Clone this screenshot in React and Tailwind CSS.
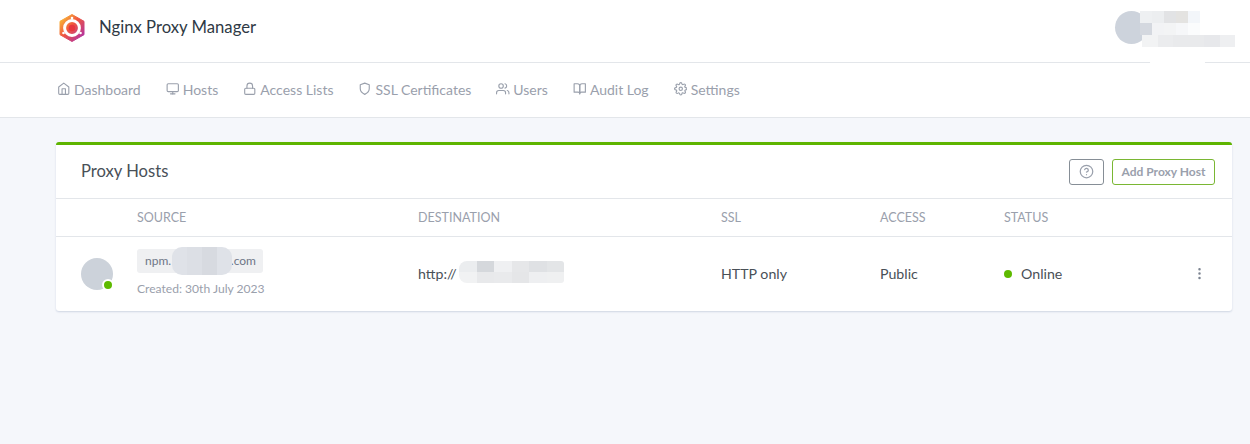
import React from 'react'
import { FiHome, FiMonitor, FiLock, FiShield, FiUsers, FiBookOpen, FiSettings, FiHelpCircle, FiMoreVertical } from 'react-icons/fi'

const navItems = [
  { label: 'Dashboard', icon: FiHome },
  { label: 'Hosts', icon: FiMonitor },
  { label: 'Access Lists', icon: FiLock },
  { label: 'SSL Certificates', icon: FiShield },
  { label: 'Users', icon: FiUsers },
  { label: 'Audit Log', icon: FiBookOpen },
  { label: 'Settings', icon: FiSettings },
]

const Logo = () => (
  <svg width="30" height="30" viewBox="0 0 30 30">
    <defs>
      <linearGradient id="hex" x1="0" y1="0" x2="1" y2="1">
        <stop offset="0" stopColor="#fbd335" />
        <stop offset="0.45" stopColor="#f0563f" />
        <stop offset="1" stopColor="#a42bb8" />
      </linearGradient>
    </defs>
    <path d="M15 1.5 27 8.3V21.7L15 28.5 3 21.7V8.3Z" fill="url(#hex)" stroke="url(#hex)" strokeLinejoin="round" />
    <circle cx="15" cy="15" r="7.4" fill="none" stroke="#fff" strokeWidth="3" />
    <circle cx="15" cy="15" r="3.2" fill="#e8373f" />
    <circle cx="6.5" cy="20" r="1.3" fill="#fff" />
    <circle cx="23.5" cy="20" r="1.3" fill="#fff" />
    <circle cx="15" cy="5" r="1.3" fill="#fff" />
  </svg>
)

// pixelated smudge the screenshot has over private text
const Smudge = ({ rows, className }) => (
  <div className={`flex flex-col overflow-hidden ${className}`}>
    {rows.map((row, i) => (
      <div key={i} className="flex flex-1">
        {row.map((color, j) => (
          <div key={j} className="flex-1" style={{ backgroundColor: color }} />
        ))}
      </div>
    ))}
  </div>
)

const App = () => {
  return (
    <div className="h-[444px] w-[1250px] overflow-hidden bg-[#f5f7fb] font-['Lato',sans-serif] text-[#495057]">
      <header className="relative z-10 flex h-[63px] items-center border-b border-[#e3e6ea] bg-white pb-[7px] pl-[57px]">
        <Logo />
        <span className="ml-[12px] text-[16.7px] text-[#2f3a45]">Nginx Proxy Manager</span>
        <div className="absolute left-[1115px] top-[11px] h-[33px] w-[33px] rounded-full bg-[#cdd3dc]" />
        <Smudge
          className="absolute left-[1140px] top-[11px] h-[24px] w-[60px]"
          rows={[
            ['#eef0f2', '#eceef0', '#e2e3e5', '#e4e3e1', '#f3f6fa'],
            ['#d4d8df', '#f2f3f5', '#f3f4f5', '#f6f7f9', '#fbfcfd'],
          ]}
        />
        <Smudge
          className="absolute left-[1142px] top-[35px] h-[12px] w-[93px]"
          rows={[['#f2f3f4', '#ebecee', '#e9eaec', '#e9eaec', '#e7e8eb', '#eeeff1']]}
        />
        <div className="absolute left-[1150px] top-[60px] h-[5px] w-[55px] rounded-full bg-white" />
      </header>

      <nav className="flex h-[55px] items-center gap-[25px] border-b border-[#e3e6ea] bg-white pb-[2px] pl-[57px] text-[14px] text-[#9aa0ac]">
        {navItems.map(({ label, icon: Icon }) => (
          <div key={label} className="flex items-center gap-[3.5px]">
            <Icon className="h-[13.5px] w-[13.5px]" />
            <span>{label}</span>
          </div>
        ))}
      </nav>

      <main className="ml-[56px] mt-[24px] w-[1176px] rounded-[3px] border-t-[3px] border-[#5eb400] bg-white shadow-[0_1px_2px_rgba(0,40,100,0.16)]">
        <div className="flex h-[54px] items-center justify-between border-b border-[#e3e6ea] pl-[25px] pr-[17px]">
          <h3 className="text-[16.6px] text-[#495057]">Proxy Hosts</h3>
          <div className="flex items-center gap-[8px]">
            <button className="flex h-[26px] w-[35px] items-center justify-center rounded-[3px] border border-[#868e96] text-[#9aa0ac]">
              <FiHelpCircle className="h-[15px] w-[15px]" />
            </button>
            <button className="flex h-[26px] w-[103px] items-center justify-center rounded-[3px] border border-[#7ab733] text-[12px] font-bold text-[#9aa0ac]">
              Add Proxy Host
            </button>
          </div>
        </div>

        <div className="grid h-[38px] grid-cols-[81px_281px_303px_159px_124px_1fr] items-center border-b border-[#e3e6ea] pt-px text-[12.5px] uppercase text-[#9aa0ac]">
          <div />
          <div>Source</div>
          <div>Destination</div>
          <div>SSL</div>
          <div>Access</div>
          <div>Status</div>
        </div>

        <div className="grid h-[74px] grid-cols-[81px_281px_303px_159px_124px_1fr] items-center text-[14.2px]">
          <div className="pl-[25px]">
            <div className="relative h-[32px] w-[32px] rounded-full bg-[#ccd2da]">
              <span className="absolute bottom-[-1px] right-[-1px] h-[12px] w-[12px] rounded-full border-2 border-white bg-[#5eba00]" />
            </div>
          </div>
          <div>
            <div className="relative flex h-[24px] w-[126px] items-center rounded-[3px] bg-[#eff0f2] pl-[8px] text-[12px] text-[#6e7687]">
              npm.
              <span className="ml-auto pr-[7px]">.com</span>
              <Smudge
                className="absolute left-[35px] top-[-2px] h-[28px] w-[60px] rounded-[10px]"
                rows={[['#dfe2e8', '#dcdfe5', '#d7dae0', '#dfe2e8']]}
              />
            </div>
            <div className="mt-[7px] text-[12.1px] text-[#9aa0ac]">Created: 30th July 2023</div>
          </div>
          <div className="relative">
            http://
            <Smudge
              className="absolute left-[41px] top-[-2px] h-[22px] w-[105px] rounded-l-[8px] rounded-r-[3px]"
              rows={[
                ['#ebedef', '#d5d8dc', '#eff0f2', '#e6e7e9', '#dfe1e4', '#e3e5e7'],
                ['#f1f2f3', '#e8e9eb', '#e9eaec', '#e5e6e8', '#eeeff1', '#eff0f1'],
              ]}
            />
          </div>
          <div>HTTP only</div>
          <div>Public</div>
          <div className="flex items-center justify-between pr-[24px]">
            <span className="flex items-center">
              <span className="mr-[9px] h-[8px] w-[8px] rounded-full bg-[#5eba00]" />
              Online
            </span>
          </div>
        </div>
      </main>
      <div className="relative">
        <FiMoreVertical className="absolute left-[1192px] top-[-45px] h-[15px] w-[15px] text-[#7b8390]" />
      </div>
    </div>
  )
}

export default App
